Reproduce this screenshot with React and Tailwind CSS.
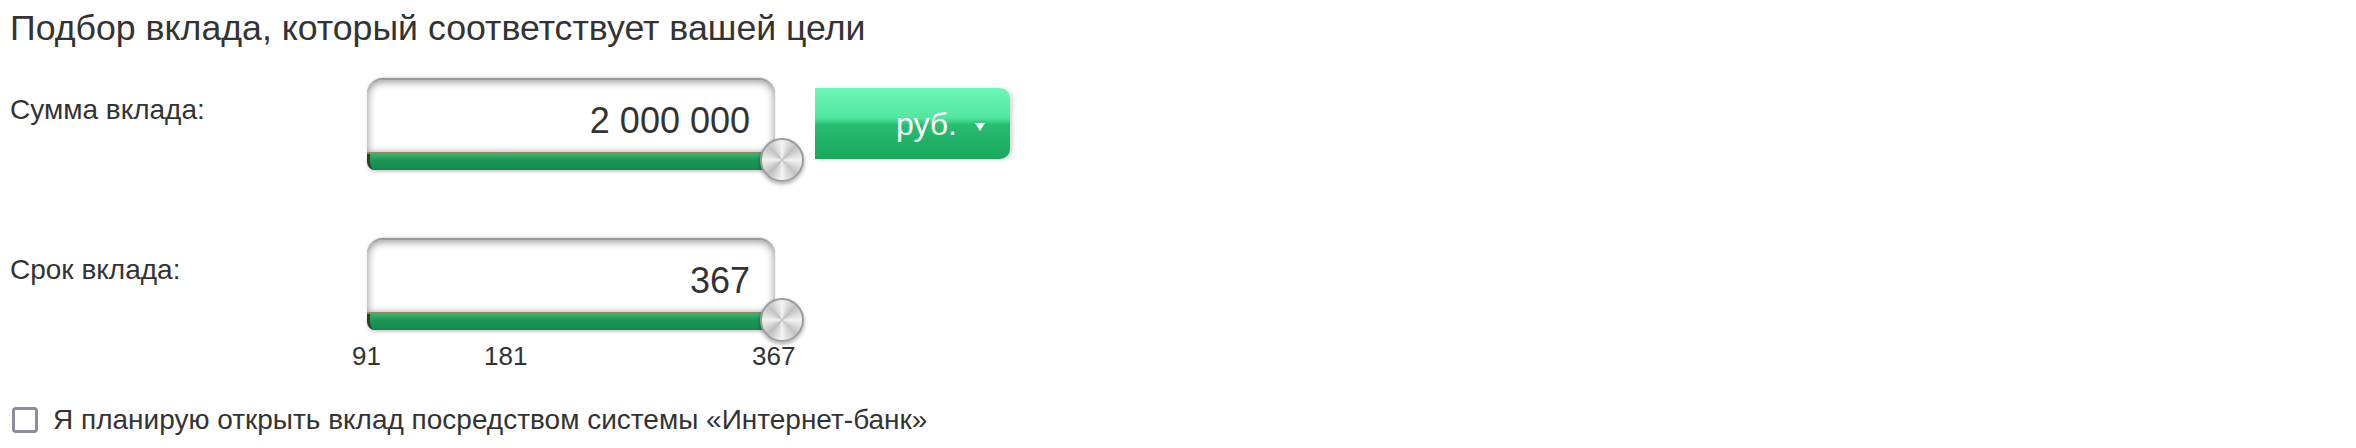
import React from 'react';

function Slider({ value }) {
  return (
    <div className="relative w-[408px] h-[92px]">
      <div className="h-[74px] rounded-t-[16px] bg-white border-t-2 border-[#9a9a9a] shadow-[inset_0_3px_8px_rgba(0,0,0,0.25),inset_3px_0_6px_rgba(0,0,0,0.12),inset_-3px_0_6px_rgba(0,0,0,0.12),0_-1px_2px_rgba(0,0,0,0.15)] flex justify-end">
        <span className="mt-[21px] mr-[25px] text-[36px] leading-[40px] text-[#333]">{value}</span>
      </div>
      <div className="h-[2px] bg-[#8f8c5c]" />
      <div className="h-[16px] rounded-b-[8px] bg-[linear-gradient(#3bb070,#1b9556_40%,#148a4f)] border-l-[3px] border-[#2f3a30] shadow-[0_2px_3px_rgba(0,0,0,0.2)]" />
      <div className="absolute left-[393px] top-[60px] w-[44px] h-[44px] rounded-full border-2 border-[#9c9c9c] bg-[conic-gradient(#f4f4f4,#bfbfbf,#f2f2f2,#c4c4c4,#f4f4f4,#bdbdbd,#f2f2f2,#c2c2c2,#f4f4f4)] shadow-[0_2px_4px_rgba(0,0,0,0.35)]" />
    </div>
  );
}

export default function App() {
  return (
    <div className="font-[Liberation_Sans,Arial,sans-serif] bg-white w-[2356px] h-[448px] pl-[10px] pt-[8px] text-[#333]">
      <h1 className="text-[35.7px] leading-[40px] font-normal">Подбор вклада, который соответствует вашей цели</h1>

      <div className="flex items-start mt-[30px]">
        <div className="w-[357px] mt-[16px] text-[28px] leading-[32px]">Сумма вклада:</div>
        <Slider value="2 000 000" />
        <div className="ml-[40px] mt-[10px] w-[195px] h-[71px] rounded-r-[10px] bg-[linear-gradient(#6ef7b8,#52e6a0_42%,#27bd70_52%,#17a85c)] shadow-[3px_1px_4px_rgba(0,0,0,0.15)] flex items-center justify-end pr-[25px] text-white">
          <span className="text-[32px] leading-[36px]">руб.</span>
          <span className="ml-[18px] mt-[6px] w-0 h-0 border-l-[5px] border-r-[5px] border-t-[8px] border-l-transparent border-r-transparent border-t-white" />
        </div>
      </div>

      <div className="flex items-start mt-[68px]">
        <div className="w-[357px] mt-[16px] text-[28px] leading-[32px]">Срок вклада:</div>
        <div>
          <Slider value="367" />
          <div className="relative h-[30px] text-[26px] leading-[28px] text-[#333]">
            <span className="absolute left-[-15px] top-[12px]">91</span>
            <span className="absolute left-[117px] top-[12px]">181</span>
            <span className="absolute left-[385px] top-[12px]">367</span>
          </div>
        </div>
      </div>

      <label className="flex items-center mt-[44px]">
        <span className="ml-[2px] w-[26px] h-[26px] rounded-[4px] border-[3px] border-[#8f8d9c] bg-white" />
        <span className="ml-[15px] text-[28px] leading-[32px]">Я планирую открыть вклад посредством системы «Интернет-банк»</span>
      </label>
    </div>
  );
}
